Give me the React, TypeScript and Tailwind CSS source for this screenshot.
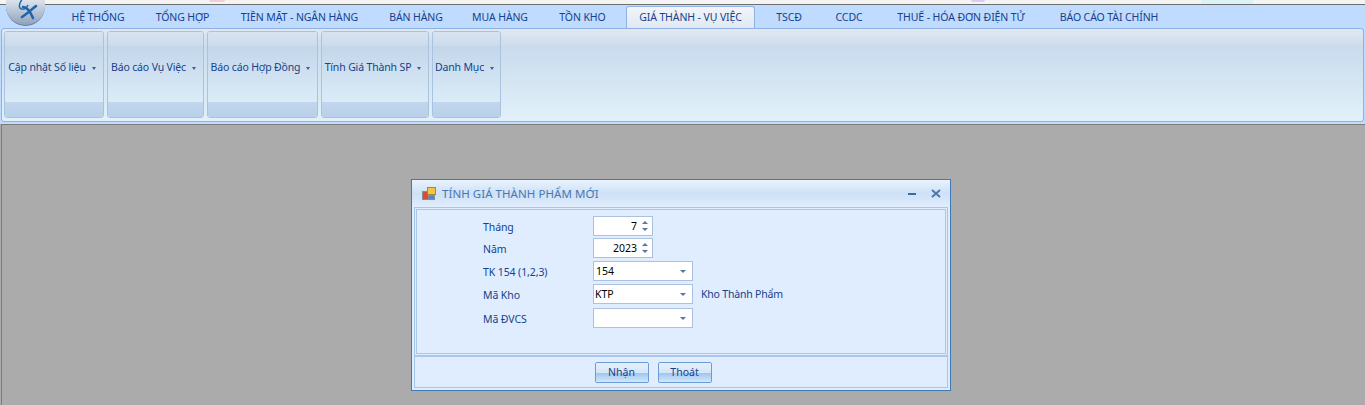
import React from "react";

const FONT = "font-['Noto_Sans','Liberation_Sans',sans-serif]";

const TABS = [
  { label: "HỆ THỐNG", w: "w-[84px]" },
  { label: "TỔNG HỢP", w: "w-[85px]" },
  { label: "TIỀN MẶT - NGÂN HÀNG", w: "w-[149px]" },
  { label: "BÁN HÀNG", w: "w-[84px]" },
  { label: "MUA HÀNG", w: "w-[84px]" },
  { label: "TỒN KHO", w: "w-[81px]" },
  { label: "GIÁ THÀNH - VỤ VIỆC", w: "w-[129px] ml-[3px]", active: true },
  { label: "TSCĐ", w: "w-[70px]" },
  { label: "CCDC", w: "w-[50px]" },
  { label: "THUẾ - HÓA ĐƠN ĐIỆN TỬ", w: "w-[174px]" },
  { label: "BÁO CÁO TÀI CHÍNH", w: "w-[122px]" },
];

const GROUPS = [
  { label: "Cập nhật Số liệu", w: "w-[100px]" },
  { label: "Báo cáo Vụ Việc", w: "w-[97px]" },
  { label: "Báo cáo Hợp Đồng", w: "w-[111px]" },
  { label: "Tính Giá Thành SP", w: "w-[108px]" },
  { label: "Danh Mục", w: "w-[69px]" },
];

function RibbonGroup({ label, w }: { label: string; w: string }) {
  return (
    <div className={`${w} h-[87px] shrink-0 rounded-[3px] border border-[#a9c3df] flex flex-col overflow-hidden shadow-[inset_0_0_0_1px_rgba(255,255,255,0.35)]`}>
      <div className="h-[14px] bg-gradient-to-b from-[#d8e3f0] to-[#ccdbec]" />
      <div className="h-[56px] pb-[12px] pr-[4px] bg-gradient-to-b from-[#c3d6ea] to-[#dbecf8] flex items-center justify-center gap-[6px] text-[10.5px] tracking-[-0.15px] text-[#15428b] whitespace-nowrap">
        <span>{label}</span>
        <span className="w-0 h-0 border-x-[2.5px] border-x-transparent border-t-[3px] border-t-[#3d5f92]" />
      </div>
      <div className="flex-1 bg-gradient-to-b from-[#c2d7ee] to-[#b9d0ea]" />
    </div>
  );
}

function Spinner({ value }: { value: string }) {
  return (
    <div className="w-[60px] h-[20px] bg-white border border-[#abc1de] flex items-center justify-end text-[10.5px] text-black">
      <span className="relative top-[1px]">{value}</span>
      <div className="w-[15px] flex flex-col items-center gap-[4px]">
        <span className="w-0 h-0 border-x-[3px] border-x-transparent border-b-[3px] border-b-[#5577a8]" />
        <span className="w-0 h-0 border-x-[3px] border-x-transparent border-t-[3px] border-t-[#5577a8]" />
      </div>
    </div>
  );
}

function Combo({ value, tight }: { value: string; tight?: boolean }) {
  return (
    <div className={`w-[100px] h-[20px] bg-white border border-[#abc1de] flex items-center justify-between ${tight ? "pl-[1px]" : "pl-[2px]"} pr-[6px] text-[10.5px] text-black`}>
      <span className="relative top-[1px]">{value}</span>
      <span className="w-0 h-0 border-x-[3px] border-x-transparent border-t-[3px] border-t-[#5577a8]" />
    </div>
  );
}

function Row({ label, children }: { label: string; children: React.ReactNode }) {
  return (
    <div className="flex items-center h-[20px]">
      <span className="w-[110px] relative top-[2px] text-[10.5px] tracking-[-0.1px] text-[#15428b]">{label}</span>
      {children}
    </div>
  );
}

function DialogButton({ label }: { label: string }) {
  return (
    <div className="w-[54px] h-[21px] rounded-[2px] border border-[#6c9bd6] overflow-hidden relative flex flex-col">
      <div className="h-[10px] bg-gradient-to-b from-[#e6f0fb] to-[#d4e5f8]" />
      <div className="flex-1 bg-gradient-to-b from-[#9cc5f0] to-[#d5e7fa]" />
      <span className="absolute inset-0 top-[1px] flex items-center justify-center text-[10.5px] text-[#15428b]">{label}</span>
    </div>
  );
}

export default function App() {
  return (
    <div className={`w-[1365px] h-[405px] overflow-hidden flex flex-col bg-[#ababab] ${FONT}`}>
      {/* strip above the window */}
      <div className="h-[5px] bg-[#f4f4f4] border-b border-[#6e6e6e] shrink-0 flex">
        <span className="ml-[209px] w-[16px] h-[2px] rounded-b-full bg-[#f3cdd4]" />
        <span className="ml-[746px] w-[14px] h-[2px] rounded-b-full bg-[#d8cff0]" />
        <span className="ml-[216px] w-[52px] h-[4px] bg-[#dcf3f6]" />
      </div>

      {/* tabs */}
      <div className="h-[119px] bg-[#bfdbff] shrink-0 flex flex-col relative">
        {/* app button */}
        <div className="absolute left-[6px] top-[-12px] w-[39px] h-[33px] rounded-b-[20px] bg-gradient-to-b from-[#f2f6fb] to-[#8fa2bb] border-b border-[#6c7f99] flex items-start justify-center overflow-hidden">
          <svg width="30" height="24" viewBox="0 0 30 24" fill="none" className="mt-[4px]">
            <path d="M12 10 C16 10 19 14 22 21 M25 9 C21 12 16 17 11 20" stroke="#1f63ad" strokeWidth="2.6" strokeLinecap="round" />
            <path d="M12 1 C8 6 6 13 13 12 C15 12 16 10 17 8" stroke="#1f63ad" strokeWidth="1.4" />
          </svg>
        </div>

        <div className="h-[23px] pl-[56px] flex items-end shrink-0">
          {TABS.map((t) => (
            <div
              key={t.label}
              className={`${t.w} shrink-0 flex items-center justify-center text-[10.5px] tracking-[-0.1px] text-[#15428b] whitespace-nowrap ${
                t.active
                  ? "h-[22px] mr-[-1px] rounded-t-[3px] border border-b-0 border-[#8db2e3] bg-gradient-to-b from-[#f2f5fa] to-[#dfe8f4] relative z-10"
                  : "h-[21px]"
              }`}
            >
              {t.label}
            </div>
          ))}
        </div>

        {/* ribbon panel */}
        <div className="h-[94px] mx-[1px] rounded-[3px] border border-[#8db2e3] bg-gradient-to-b from-[#c3d6ea] to-[#e2f1f9] relative flex flex-col">
          <div className="h-[17px] bg-gradient-to-b from-[#e1e8f2] to-[#cfdcec] rounded-t-[3px] absolute inset-x-0 top-0" />
          <div className="relative flex gap-[3px] pl-[2px] pt-[2px]">
            {GROUPS.map((g) => (
              <RibbonGroup key={g.label} label={g.label} w={g.w} />
            ))}
          </div>
        </div>
      </div>

      {/* mdi area */}
      <div className="flex-1 ml-[1px] bg-[#ababab] border-t border-l border-[#7d7d7d] pl-[409px] pt-[54px]">
        {/* dialog window */}
        <div className="w-[540px] h-[212px] border border-[#3f79b8] bg-[#e0edff] flex flex-col">
          <div className="h-[27px] shrink-0 bg-gradient-to-b from-[#eaf3fd] via-[#cde1f8] to-[#e1edfc] flex items-center pl-[10px] pr-[8px] relative">
            <svg width="14" height="14" viewBox="0 0 14 14" className="shrink-0">
              <rect x="0.5" y="4.5" width="6" height="8" fill="#d94a3a" stroke="#8c8c8c" />
              <rect x="5.5" y="0.5" width="8" height="7" fill="#f5c63c" stroke="#9a8a50" />
              <rect x="6.5" y="8.5" width="6" height="4" fill="#4d86d1" stroke="#8c8c8c" />
            </svg>
            <span className="ml-[6px] text-[11.5px] tracking-[0.05px] text-[#4a78ae]">TÍNH GIÁ THÀNH PHẨM MỚI</span>
            <span className="ml-auto w-[8px] h-[2px] bg-[#3d6a9e] mr-[15px] mt-[1px]" />
            <svg width="10" height="9" viewBox="0 0 10 9" className="mr-[1px]">
              <path d="M1 1 L9 8 M9 1 L1 8" stroke="#4f77a8" strokeWidth="2" />
            </svg>
          </div>

          <div className="flex-1 mx-[2px] mb-[2px] border border-[#a5c6ee] flex flex-col">
            <div className="h-[145px] m-[1px] border border-[#a9c7ec] bg-[#e0edff] pl-[66px] pt-[6px] flex flex-col gap-[3px]">
              <Row label="Tháng"><Spinner value="7" /></Row>
              <div className="mt-[-1px]"><Row label="Năm"><Spinner value="2023" /></Row></div>
              <Row label="TK 154 (1,2,3)"><Combo value="154" /></Row>
              <Row label="Mã Kho">
                <Combo value="KTP" tight />
                <span className="ml-[8px] relative top-[1px] text-[10.5px] tracking-[-0.2px] text-[#15428b]">Kho Thành Phẩm</span>
              </Row>
              <div className="mt-[1px]"><Row label="Mã ĐVCS"><Combo value="" /></Row></div>
            </div>
            <div className="flex-1 border-t-2 border-[#a9c7ec] flex items-center justify-center gap-[9px] pr-[56px]">
              <DialogButton label="Nhận" />
              <DialogButton label="Thoát" />
            </div>
          </div>
        </div>
      </div>
    </div>
  );
}
